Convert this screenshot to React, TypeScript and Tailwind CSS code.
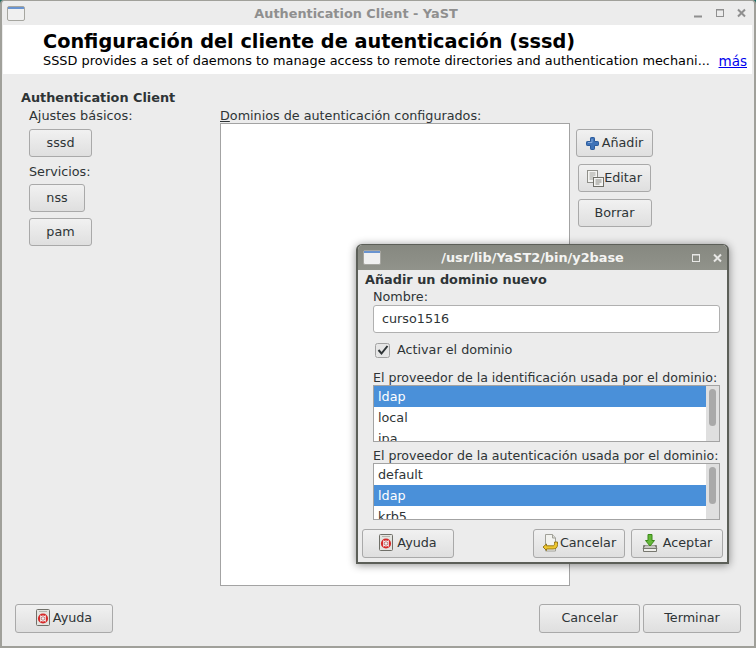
import React from "react";

const font = "font-['DejaVu_Sans',sans-serif]";

function HelpIcon() {
  return (
    <svg width="14" height="17" viewBox="0 0 14 17" className="shrink-0">
      <rect x="0.500" y="0.500" width="13" height="16" rx="1" fill="#e4e4e0" stroke="#6f6f68" />
      <path d="M3 2.500h8" stroke="#b5b5ad" />
      <circle cx="7" cy="9.500" r="4" fill="#fff" stroke="#d62a2a" strokeWidth="2.200" />
      <path d="M4.200 6.700l1.600 1.600M9.800 6.700L8.200 8.300M4.200 12.300l1.600-1.600M9.800 12.300l-1.600-1.600" stroke="#f6f6f6" strokeWidth="1.200" />
      <circle cx="7" cy="9.500" r="1.800" fill="#f0f0f0" stroke="#9a3030" strokeWidth="0.600" />
    </svg>
  );
}

function PlusIcon() {
  return (
    <svg width="13" height="13" viewBox="0 0 13 13" className="shrink-0">
      <path d="M4.500 1.200a.7.7 0 0 1 .7-.7h2.600a.7.7 0 0 1 .7.7v3.300h3.300a.7.7 0 0 1 .7.7v2.600a.7.7 0 0 1-.7.7H8.500v3.300a.7.7 0 0 1-.7.7H5.200a.7.7 0 0 1-.7-.7V8.500H1.200a.7.7 0 0 1-.7-.7V5.200a.7.7 0 0 1 .7-.7h3.300z" fill="#3f73b8" stroke="#2a5a9c" />
      <path d="M6 2v3.500H2" fill="none" stroke="#86aadb" />
    </svg>
  );
}

function EditIcon() {
  return (
    <svg width="17" height="17" viewBox="0 0 17 17" className="shrink-0">
      <rect x="0.500" y="0.500" width="10" height="12" fill="#f4f4f2" stroke="#8f8f89" />
      <path d="M2.500 3h6M2.500 5h6M2.500 7h4M2.500 9h4" stroke="#a0a09a" />
      <rect x="6.500" y="7.500" width="10" height="9" fill="#f4f4f2" stroke="#6f6f68" />
      <path d="M8.500 10h6M8.500 12h6M8.500 14h4" stroke="#8a8a84" />
    </svg>
  );
}

function CancelIcon() {
  return (
    <svg width="17" height="18" viewBox="0 0 17 18" className="shrink-0">
      <path d="M3.500.5h7l3 3.500v13h-10z" fill="#f2f2ee" stroke="#a0a098" />
      <path d="M10.500.5v3.500h3" fill="#dcdcd6" stroke="#a0a098" />
      <path d="M1 13l3.500-3v1.800h6.500c1.200 0 1.500-.8 1.500-2.300V8h3v2.500c0 3-1.500 4.500-4.500 4.500H4.500v1.500z" fill="#eec62e" stroke="#8f7010" strokeWidth="0.900" />
    </svg>
  );
}

function AcceptIcon() {
  return (
    <svg width="16" height="18" viewBox="0 0 16 18" className="shrink-0">
      <path d="M1.500 11.500h13v6h-13z" fill="#efefeb" stroke="#77776f" />
      <path d="M3 11.500l-2 3h14l-2-3" fill="#c8c8c2" stroke="#77776f" />
      <path d="M6 .5h4v6h2.500L8 12 3.500 6.500H6z" fill="#66b83a" stroke="#3b8a18" />
    </svg>
  );
}

function WindowIcon() {
  return (
    <svg width="18" height="15" viewBox="0 0 18 15" className="shrink-0">
      <rect x="0.500" y="0.500" width="17" height="14" rx="1.500" fill="#f0f0f0" stroke="#a6a6a0" />
      <rect x="1" y="1" width="16" height="2" fill="#6a94d0" />
    </svg>
  );
}

function Button({ className, icon, children }: { className: string; icon?: React.ReactNode; children: React.ReactNode }) {
  return (
    <div className={`flex items-center justify-center rounded-[3px] border border-[#a9a9a9] bg-gradient-to-b from-[#f1f1f1] to-[#dfdfdf] text-[12.75px] leading-4 text-[#2e3436] ${className}`}>
      {icon}
      <span>{children}</span>
    </div>
  );
}

function ListBox({ items, selected }: { items: string[]; selected: number }) {
  return (
    <div className="flex h-[57px] w-[347px] overflow-hidden border border-[#a3a3a3] bg-white">
      <div className="flex-1 overflow-hidden">
        {items.map((item, i) => (
          <div key={item} className={`h-[21px] pl-1 text-[12.75px] leading-[21px] ${i === selected ? "bg-[#4a90d9] text-white" : "text-[#2e3436]"}`}>
            {item}
          </div>
        ))}
      </div>
      <div className="w-[13px] bg-[#dfdfdf] p-[3px]">
        <div className="h-[37px] rounded-[4px] bg-[#a9a9a9]" />
      </div>
    </div>
  );
}

function AddDomainDialog() {
  return (
    <div className={`absolute left-[356px] top-[244px] flex h-[320px] w-[373px] flex-col overflow-hidden rounded-t-[6px] border-2 border-t border-[#5c5f58] bg-[#ececec] shadow-[0_1px_8px_rgba(0,0,0,0.45)] ${font}`}>
      <div className="relative flex h-[25px] shrink-0 items-center justify-center bg-gradient-to-b from-[#868880] to-[#91938b] text-[12.85px] font-bold text-[#f4f4f2]">
        <div className="absolute left-[5px] top-[5px]">
          <WindowIcon />
        </div>
        <span className="pr-5">/usr/lib/YaST2/bin/y2base</span>
        <svg width="30" height="10" viewBox="0 0 30 10" className="absolute right-[5px] top-[8px]">
          <rect x="0.500" y="1.500" width="7" height="7" fill="none" stroke="#e8e8e6" strokeWidth="1" />
          <path d="M0.500 2h7" stroke="#e8e8e6" />
          <path d="M22 1.500l7 7M29 1.500l-7 7" stroke="#e8e8e6" strokeWidth="2" />
        </svg>
      </div>
      <div className="flex flex-1 flex-col pl-[7px] pt-[1px]">
        <div className="h-4 pt-px text-[12.85px] font-bold leading-4 text-[#2e3436]">Añadir un dominio nuevo</div>
        <div className="ml-2 mt-[2px] flex flex-col text-[12.75px] leading-4 text-[#2e3436]">
          <div>Nombre:</div>
          <div className="h-[28px] w-[347px] rounded-[3px] border border-[#b0b0b0] bg-white pl-2 leading-[26px]">curso1516</div>
          <div className="ml-[2px] mt-[9px] flex h-4 items-center">
            <svg width="15" height="15" viewBox="0 0 15 15" className="shrink-0">
              <rect x="0.500" y="0.500" width="14" height="14" rx="2" fill="#e6e6e6" stroke="#a2a2a2" />
              <path d="M3.500 7l3 3.500L12.500 3" fill="none" stroke="#2e3436" strokeWidth="2" />
            </svg>
            <span className="ml-[7px]">Activar el dominio</span>
          </div>
          <div className="mt-[12px] h-[15px] w-[350px] whitespace-nowrap text-[12.6px]">El proveedor de la identificación usada por el dominio:</div>
          <ListBox items={["ldap", "local", "ipa"]} selected={0} />
          <div className="mt-[6px] h-[15px] w-[350px] whitespace-nowrap text-[12.6px]">El proveedor de la autenticación usada por el dominio:</div>
          <ListBox items={["default", "ldap", "krb5"]} selected={1} />
        </div>
        <div className="-ml-[3px] mt-[9px] flex">
          <Button className="h-[29px] w-[92px] gap-1 pb-[2px]" icon={<HelpIcon />}>Ayuda</Button>
          <Button className="ml-[79px] h-[29px] w-[92px] gap-[1px] pb-[2px]" icon={<CancelIcon />}>Cancelar</Button>
          <Button className="ml-[6px] h-[29px] w-[92px] gap-[5px] pb-[2px]" icon={<AcceptIcon />}>Aceptar</Button>
        </div>
      </div>
    </div>
  );
}

export default function App() {
  return (
    <div className={`relative h-[648px] w-[756px] overflow-hidden bg-[#1d6b62] ${font}`}>
      <div className="flex h-[648px] flex-col rounded-t-[4px] border-2 border-t border-[#a0a09a] bg-[#ececec] pt-px">
        {/* title bar */}
        <div className="relative flex h-[23px] shrink-0 items-center justify-center text-[12.85px] font-bold text-[#8f8f8f]">
          <div className="absolute left-[5px] top-[4px]">
            <WindowIcon />
          </div>
          <span className="pr-11">Authentication Client - YaST</span>
          <svg width="52" height="10" viewBox="0 0 52 10" className="absolute right-[8px] top-[6px]">
            <path d="M0 8.500h8" stroke="#8f8f8f" strokeWidth="2" />
            <rect x="22.500" y="1.500" width="7" height="7" fill="none" stroke="#8f8f8f" />
            <path d="M22.500 2h7" stroke="#8f8f8f" />
            <path d="M44 1.500l7 7M51 1.500l-7 7" stroke="#8f8f8f" strokeWidth="2" />
          </svg>
        </div>

        {/* header */}
        <div className="relative mr-[2px] ml-px h-[49px] shrink-0 bg-white pl-10 text-black">
          <div className="pt-[6px] text-[19.3px] font-bold leading-[22px]">Configuración del cliente de autenticación (sssd)</div>
          <div className="flex h-4 w-[704px] items-center justify-between text-[12.87px] leading-4">
            <span>SSSD provides a set of daemons to manage access to remote directories and authentication mechani...</span>
            <span className="text-[13.5px] text-[#0000ee] underline">más</span>
          </div>
        </div>

        {/* body */}
        <div className="flex flex-1 flex-col pl-[19px] pt-[15px] text-[12.75px] leading-4 text-[#2e3436]">
          <div className="h-4 pt-px text-[12.85px] font-bold">Authentication Client</div>
          <div className="mt-[2px] flex">
            <div className="ml-2 flex w-[191px] flex-col items-start">
              <div className="h-4 pt-px text-[12.9px]">Ajustes básicos:</div>
              <Button className="mt-[6px] h-[28px] w-[63px]">sssd</Button>
              <div className="mt-[6px] h-4 pt-px">Servicios:</div>
              <Button className="mt-[5px] h-[28px] w-[56px]">nss</Button>
              <Button className="mt-[6px] h-[28px] w-[63px]">pam</Button>
            </div>
            <div className="flex w-[350px] flex-col">
              <div className="h-4 pt-px"><span className="underline">D</span>ominios de autenticación configurados:</div>
              <div className="h-[463px] border border-[#a3a3a3] bg-white" />
            </div>
            <div className="ml-[6px] flex w-[77px] flex-col items-center gap-[7px] pt-[22px]">
              <Button className="h-[28px] w-[77px] gap-[3px]" icon={<PlusIcon />}>Añadir</Button>
              <Button className="h-[28px] w-[73px]" icon={<EditIcon />}>Editar</Button>
              <Button className="h-[28px] w-[74px]">Borrar</Button>
            </div>
          </div>
          <div className="ml-[-6px] mt-[18px] flex pr-[13px]">
            <Button className="h-[29px] w-[98px] gap-[3px] pb-[2px]" icon={<HelpIcon />}>Ayuda</Button>
            <Button className="ml-auto h-[29px] w-[101px] pb-[2px]">Cancelar</Button>
            <Button className="ml-[3px] h-[29px] w-[98px] pb-[2px]">Terminar</Button>
          </div>
        </div>
      </div>
      <AddDomainDialog />
    </div>
  );
}
